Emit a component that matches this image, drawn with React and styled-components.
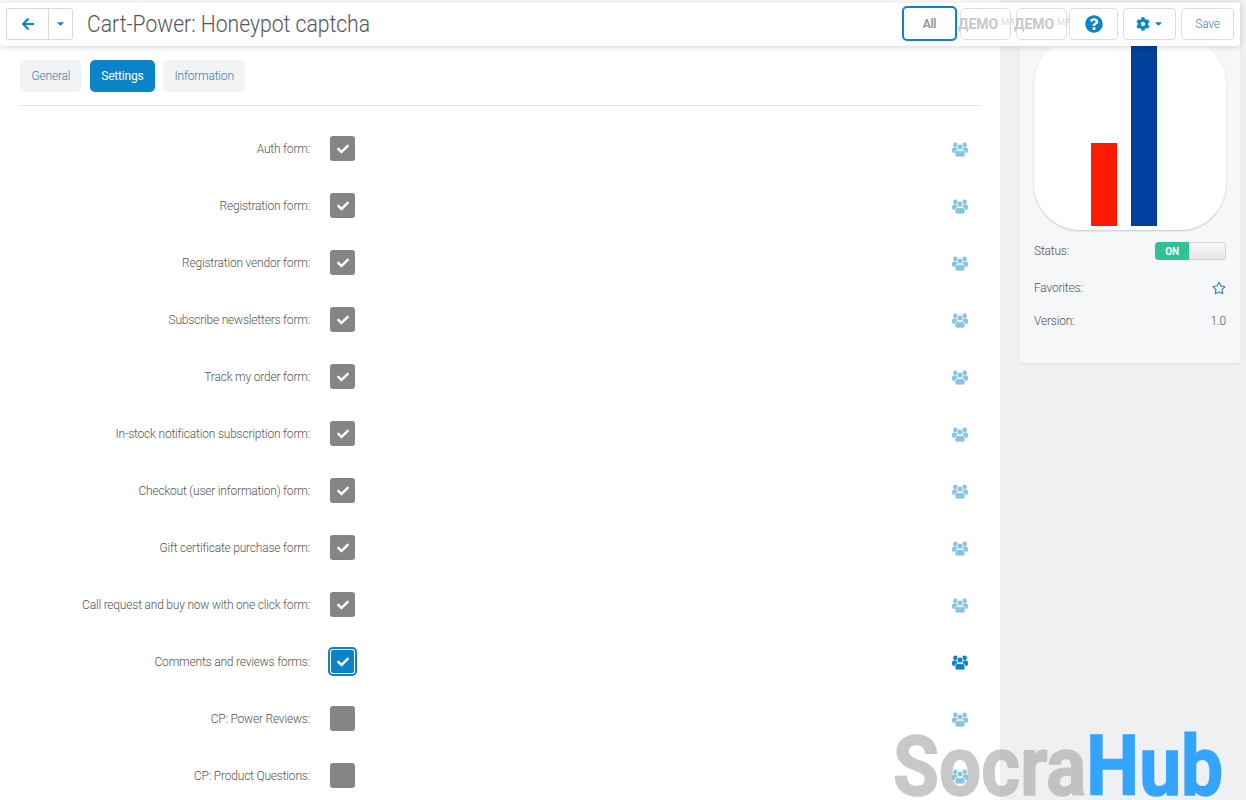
import React from "react";
import styled, { createGlobalStyle } from "styled-components";
import { FaArrowLeft, FaCaretDown, FaCheck, FaCog, FaQuestionCircle, FaRegStar } from "react-icons/fa";

const GlobalStyles = createGlobalStyle`
	html, body {
		margin: 0;
		height: 100%;
		overflow: hidden;
		background: #eef0f2;
		font-family: Roboto, "Liberation Sans", sans-serif;
		font-weight: 300;
		font-size: 12px;
		letter-spacing: -0.2px;
		color: #555;
	}
`;

const Page = styled.div`
	display: flex;
	height: 800px;
	position: relative;
	overflow: hidden;
`;

const Main = styled.main`
	width: 1000px;
	flex: none;
	box-sizing: border-box;
	height: 800px;
	padding: 60px 20px 0;
	background: #fff;
`;

const Side = styled.aside`
	flex: 1;
	padding: 0 6px 0 20px;
`;

const Header = styled.header`
	position: absolute;
	left: 0;
	top: 2px;
	width: 1240px;
	height: 44px;
	box-sizing: border-box;
	padding: 0 6px 2px;
	display: flex;
	align-items: center;
	background: #fff;
	border-top: 1px solid #f4f4f4;
	border-radius: 0 0 4px 4px;
	box-shadow: 0 1px 6px rgba(0, 0, 0, 0.16);
	z-index: 2;
`;

const BackGroup = styled.div`
	display: flex;
	width: 67px;
	height: 32px;
	box-sizing: border-box;
	border: 1px solid #d9d9d9;
	border-radius: 3px;
	margin-right: 14px;
`;

const BackPart = styled.div`
	flex: ${(p) => (p.$wide ? "0 0 41px" : "1")};
	display: flex;
	align-items: center;
	justify-content: center;
	color: #0a84c6;
	font-size: ${(p) => (p.$wide ? "14px" : "11px")};
	border-right: ${(p) => (p.$wide ? "1px solid #d9d9d9" : "0")};
`;

const Title = styled.h1`
	flex: 1;
	margin: 0;
	font-size: 24px;
	font-weight: 300;
	line-height: 32px;
	letter-spacing: 0;
	color: #555;
`;

const TitleText = styled.span`
	display: inline-block;
	transform: scaleX(0.88);
	transform-origin: left center;
	white-space: nowrap;
`;

const Toolbar = styled.div`
	display: flex;
	align-items: center;
`;

const ToolButton = styled.div`
	width: ${(p) => p.$w}px;
	height: 32px;
	box-sizing: border-box;
	margin-left: ${(p) => p.$gap}px;
	display: flex;
	align-items: center;
	justify-content: center;
	gap: 3px;
	border: 1px solid #dcdcdc;
	border-radius: 4px;
	color: #0a84c6;
	background: #fff;
	font-size: ${(p) => p.$icon || 12}px;
`;

const AllButton = styled(ToolButton)`
	height: 35px;
	border: 2px solid #0a84c6;
	border-radius: 5px;
	color: #8a8a8a;
	font-weight: 500;
`;

const DemoButton = styled(ToolButton)`
	justify-content: flex-start;
	gap: 0;
	font-weight: 700;
	font-size: 14px;
	letter-spacing: 0;
	color: #c8c8c8;
	white-space: nowrap;
	border-radius: 6px;
`;

const DemoText = styled.span`
	margin-left: -3px;
`;

const DemoSup = styled.span`
	font-size: 9px;
	font-weight: 300;
	margin-left: 3px;
	margin-top: -4px;
	color: #c8c8c8;
`;

const SaveLabel = styled.span`
	color: #3a7fb5;
	font-weight: 300;
`;

const Tabs = styled.nav`
	display: flex;
	gap: 8px;
	padding-bottom: 13px;
	border-bottom: 1px solid #e4e4e4;
	margin-bottom: 14px;
`;

const Tab = styled.div`
	height: 32px;
	box-sizing: border-box;
	padding: 0 11.5px;
	display: flex;
	align-items: center;
	border-radius: 5px;
	font-weight: ${(p) => (p.$active ? 400 : 300)};
	background: ${(p) => (p.$active ? "#0a84c6" : "#f2f3f5")};
	color: ${(p) => (p.$active ? "#fff" : "#3a7fb5")};
`;

const Row = styled.div`
	display: grid;
	grid-template-columns: 290px 25px 1fr 16px;
	column-gap: 20px;
	height: 57px;
	align-items: center;
	padding-right: 12px;
`;

const Label = styled.label`
	text-align: right;
	color: #555;
`;

const Check = styled.div`
	width: 25px;
	height: 25px;
	box-sizing: border-box;
	display: flex;
	align-items: center;
	justify-content: center;
	border-radius: 3px;
	color: #fff;
	font-size: 12px;
	background: ${(p) => (p.$focus ? "#0a84c6" : "#858585")};
	box-shadow: ${(p) => (p.$focus ? "inset 0 0 0 1px #fff, 0 0 0 2px #0a84c6" : "none")};
`;

const Shared = styled.div`
	display: flex;
	justify-content: center;
	padding-top: 1px;
	color: ${(p) => (p.$focus ? "#0a84c6" : "#86c3e6")};
`;

const Card = styled.section`
	height: 325px;
	margin-top: 38px;
	box-sizing: border-box;
	padding: 0 14px;
	background: #f6f7f8;
	border-radius: 0 0 3px 3px;
	box-shadow: 0 1px 2px rgba(0, 0, 0, 0.07);
`;

const LogoTile = styled.div`
	height: 192px;
	display: flex;
	align-items: flex-end;
	justify-content: center;
	gap: 14px;
	padding: 0 12px 4px 0;
	box-sizing: border-box;
	background: #fff;
	border-radius: 46px;
	box-shadow: 0 1px 2px rgba(0, 0, 0, 0.2);
`;

const Bar = styled.div`
	width: 26px;
	height: ${(p) => p.$h}px;
	background: ${(p) => p.$color};
`;

const InfoRow = styled.div`
	display: flex;
	align-items: center;
	justify-content: space-between;
	height: 18px;
	margin-top: ${(p) => p.$top}px;
	color: #555;
`;

const Toggle = styled.div`
	width: 71px;
	height: 18px;
	display: flex;
	border-radius: 4px;
	overflow: hidden;
	background: linear-gradient(#fafafa, #e4e4e4);
	box-shadow: inset 0 0 0 1px #d4d4d4;
`;

const ToggleOn = styled.div`
	width: 34px;
	display: flex;
	align-items: center;
	justify-content: center;
	background: #2fc296;
	color: #fff;
	font-size: 10px;
	font-weight: 700;
`;

const StarWrap = styled.div`
	display: flex;
	color: #3a8ac6;
	font-size: 14px;
`;

const Watermark = styled.div`
	position: absolute;
	left: 893px;
	top: 735px;
	font-family: Roboto, sans-serif;
	font-weight: 700;
	font-size: 84px;
	line-height: 64px;
	letter-spacing: 0;
	white-space: nowrap;
	transform: scaleX(0.89);
	transform-origin: left center;
	z-index: 3;
`;

const WatermarkGrey = styled.span`
	color: #a5a5a5;
	opacity: 0.6;
	-webkit-text-stroke: 1.5px #a5a5a5;
`;

const WatermarkBlue = styled.span`
	color: #33a5ff;
	-webkit-text-stroke: 1.5px #33a5ff;
`;

const UsersIcon = () => (
	<svg width="16" height="15" viewBox="0 0 16 15" fill="currentColor">
		<circle cx="3.4" cy="2.9" r="2.3" />
		<circle cx="12.6" cy="2.9" r="2.3" />
		<rect x="0" y="5.6" width="5.5" height="5.4" rx="2" />
		<rect x="10.5" y="5.6" width="5.5" height="5.4" rx="2" />
		<circle cx="8" cy="5" r="3" stroke="#fff" strokeWidth="0.8" />
		<path d="M5.2 8.6h5.6c1.3 0 2.2 1 2.2 2.3v2.2c0 1-.8 1.9-1.9 1.9H4.9c-1.1 0-1.9-.9-1.9-1.9v-2.2c0-1.3.9-2.3 2.2-2.3z" stroke="#fff" strokeWidth="0.8" />
	</svg>
);

const rows = [
	{ label: "Auth form:", checked: true },
	{ label: "Registration form:", checked: true },
	{ label: "Registration vendor form:", checked: true },
	{ label: "Subscribe newsletters form:", checked: true },
	{ label: "Track my order form:", checked: true },
	{ label: "In-stock notification subscription form:", checked: true },
	{ label: "Checkout (user information) form:", checked: true },
	{ label: "Gift certificate purchase form:", checked: true },
	{ label: "Call request and buy now with one click form:", checked: true },
	{ label: "Comments and reviews forms:", checked: true, focus: true },
	{ label: "CP: Power Reviews:", checked: false },
	{ label: "CP: Product Questions:", checked: false },
];

const App = () => {
	return (
		<>
			<GlobalStyles />
			<Page>
				<Header>
					<BackGroup>
						<BackPart $wide>
							<FaArrowLeft />
						</BackPart>
						<BackPart>
							<FaCaretDown />
						</BackPart>
					</BackGroup>
					<Title>
						<TitleText>Cart-Power: Honeypot captcha</TitleText>
					</Title>
					<Toolbar>
						<AllButton $w={55} $gap={0}>All</AllButton>
						<DemoButton $w={51} $gap={3}>
							<DemoText>ДЕМО</DemoText>
							<DemoSup>МА</DemoSup>
						</DemoButton>
						<DemoButton $w={51} $gap={5}>
							<DemoText>ДЕМО</DemoText>
							<DemoSup>МА</DemoSup>
						</DemoButton>
						<ToolButton $w={49} $gap={2} $icon={18}>
							<FaQuestionCircle />
						</ToolButton>
						<ToolButton $w={53} $gap={5} $icon={14}>
							<FaCog />
							<FaCaretDown size={11} />
						</ToolButton>
						<ToolButton $w={53} $gap={5}>
							<SaveLabel>Save</SaveLabel>
						</ToolButton>
					</Toolbar>
				</Header>

				<Main>
					<Tabs>
						<Tab>General</Tab>
						<Tab $active>Settings</Tab>
						<Tab>Information</Tab>
					</Tabs>
					{rows.map((row) => (
						<Row key={row.label}>
							<Label>{row.label}</Label>
							<Check $focus={row.focus}>{row.checked && <FaCheck />}</Check>
							<span />
							<Shared $focus={row.focus}>
								<UsersIcon />
							</Shared>
						</Row>
					))}
				</Main>

				<Side>
					<Card>
						<LogoTile>
							<Bar $h={83} $color="#ff1a00" />
							<Bar $h={188} $color="#00409c" />
						</LogoTile>
						<InfoRow $top={12}>
							<span>Status:</span>
							<Toggle>
								<ToggleOn>ON</ToggleOn>
							</Toggle>
						</InfoRow>
						<InfoRow $top={19}>
							<span>Favorites:</span>
							<StarWrap>
								<FaRegStar />
							</StarWrap>
						</InfoRow>
						<InfoRow $top={15}>
							<span>Version:</span>
							<span>1.0</span>
						</InfoRow>
					</Card>
				</Side>

				<Watermark>
					<WatermarkGrey>Socra</WatermarkGrey>
					<WatermarkBlue>Hub</WatermarkBlue>
				</Watermark>
			</Page>
		</>
	);
};

export default App;
